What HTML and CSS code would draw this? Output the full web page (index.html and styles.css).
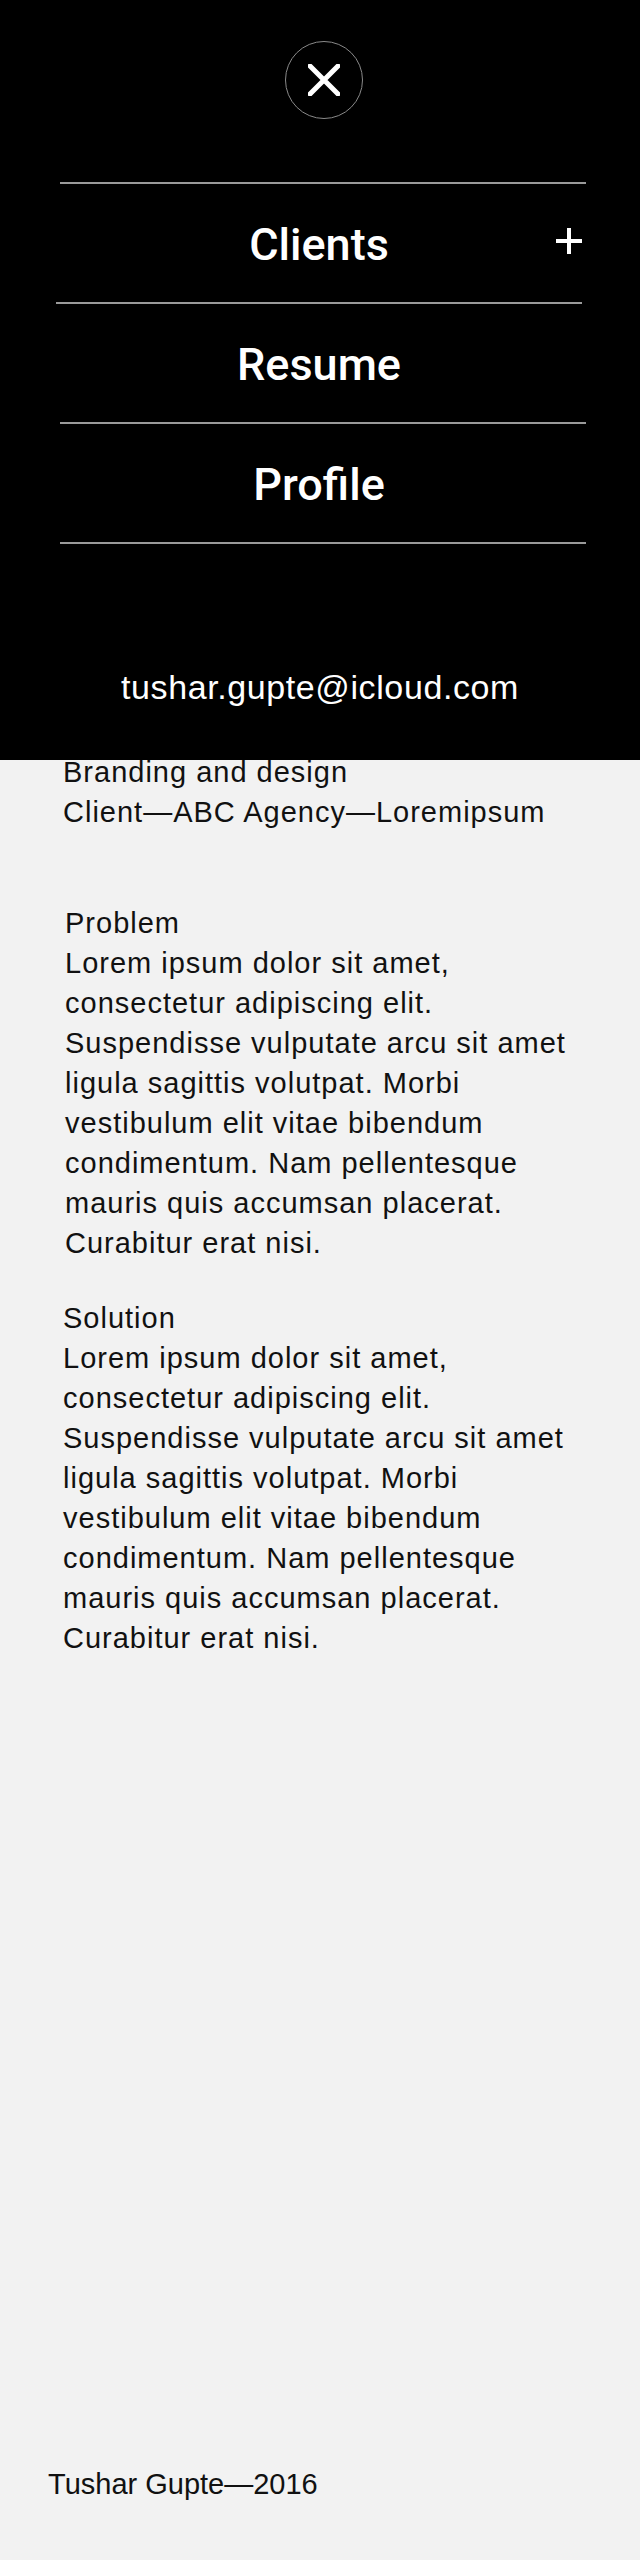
FILE: index.html
```html
<!DOCTYPE html>
<html lang="en">
<head>
<meta charset="utf-8">
<title>Tushar Gupte — Branding and design</title>
<link rel="stylesheet" href="styles.css">
</head>
<body>
<div class="page">
  <main class="content">
    <section class="intro">
      <p>Branding and design</p>
      <p>Client—ABC Agency—Loremipsum</p>
    </section>
    <section class="block block--problem">
      <h2 class="block-title">Problem</h2>
      <p>Lorem ipsum dolor sit amet, consectetur adipiscing elit. Suspendisse vulputate arcu sit amet ligula sagittis volutpat. Morbi vestibulum elit vitae bibendum condimentum. Nam pellentesque mauris quis accumsan placerat. Curabitur erat nisi.</p>
    </section>
    <section class="block">
      <h2 class="block-title">Solution</h2>
      <p>Lorem ipsum dolor sit amet, consectetur adipiscing elit. Suspendisse vulputate arcu sit amet ligula sagittis volutpat. Morbi vestibulum elit vitae bibendum condimentum. Nam pellentesque mauris quis accumsan placerat. Curabitur erat nisi.</p>
    </section>
  </main>
  <footer class="footer">Tushar Gupte—2016</footer>

  <nav class="menu" aria-label="Main menu">
    <button class="close" type="button" aria-label="Close menu">
      <svg class="close-icon" viewBox="0 0 32 32" width="32" height="32" aria-hidden="true">
        <path d="M2 2 L30 30 M30 2 L2 30" stroke="#fff" stroke-width="5" fill="none" stroke-linecap="square"/>
      </svg>
    </button>
    <div class="rule"></div>
    <a class="menu-item" href="#">
      <span class="menu-spacer"></span>
      <span class="menu-label">Clients</span>
      <span class="menu-plus">
        <svg viewBox="0 0 26 26" width="26" height="26" aria-hidden="true">
          <path d="M13 0 V26 M0 13 H26" stroke="#fff" stroke-width="4" fill="none"/>
        </svg>
      </span>
    </a>
    <div class="rule rule--alt"></div>
    <a class="menu-item" href="#">
      <span class="menu-spacer"></span>
      <span class="menu-label">Resume</span>
      <span class="menu-spacer"></span>
    </a>
    <div class="rule"></div>
    <a class="menu-item" href="#">
      <span class="menu-spacer"></span>
      <span class="menu-label">Profile</span>
      <span class="menu-spacer"></span>
    </a>
    <div class="rule"></div>
    <a class="menu-email" href="#">tushar.gupte@icloud.com</a>
  </nav>
</div>
</body>
</html>
```

FILE: styles.css
```css
* {
  box-sizing: border-box;
}

html, body {
  margin: 0;
  padding: 0;
}

body {
  background: #f2f2f2;
  color: #111;
  font-family: "Liberation Sans", Arial, sans-serif;
}

.page {
  position: relative;
  min-height: 2560px;
  display: flex;
  flex-direction: column;
}

/* ---------- page content ---------- */
.content {
  padding: 752px 0 0 63px;
  font-size: 29px;
  line-height: 40px;
  letter-spacing: 1px;
}

.content p,
.content h2 {
  margin: 0;
  font-size: inherit;
  font-weight: 400;
}

.intro {
  margin: 0;
}

.block {
  width: 520px;
  margin: 35px 0 0 0;
}

.block--problem {
  margin-top: 71px;
  margin-left: 2px;
}

.footer {
  margin-top: auto;
  padding: 0 0 56px 48px;
  font-size: 29px;
  line-height: 40px;
  color: #111;
}

/* ---------- overlay menu ---------- */
.menu {
  position: absolute;
  top: 0;
  left: 0;
  right: 0;
  height: 760px;
  background: #000;
  color: #fff;
  display: flex;
  flex-direction: column;
}

.close {
  width: 78px;
  height: 78px;
  margin: 41px 0 0 285px;
  padding: 0;
  border: 1.5px solid #8a8a8a;
  border-radius: 50%;
  background: transparent;
  display: flex;
  align-items: center;
  justify-content: center;
}

.close-icon {
  display: block;
}

.rule {
  height: 2px;
  width: 526px;
  margin-left: 60px;
  background: #9a9a9a;
}

.close + .rule {
  margin-top: 63px;
}

.rule--alt {
  margin-left: 56px;
}

.menu-item {
  height: 118px;
  width: 526px;
  margin-left: 56px;
  display: grid;
  grid-template-columns: 1fr auto 1fr;
  align-items: center;
  color: #fff;
  text-decoration: none;
  font-family: Roboto, "Liberation Sans", sans-serif;
  font-weight: 500;
  font-size: 45px;
  line-height: 50px;
}

.menu-label {
  padding-top: 4px;
}

.menu-plus {
  justify-self: end;
  display: flex;
  padding-bottom: 4px;
}

.menu-plus svg {
  display: block;
}

.menu-email {
  margin-top: 123px;
  align-self: center;
  color: #fff;
  text-decoration: none;
  font-size: 34px;
  line-height: 40px;
  letter-spacing: 0.6px;
}
```
